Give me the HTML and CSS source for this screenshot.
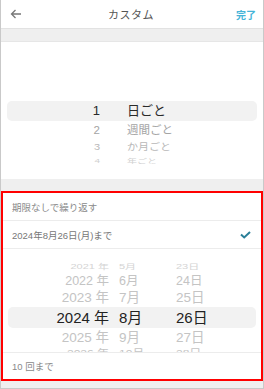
FILE: index.html
```html
<!DOCTYPE html>
<html lang="ja">
<head>
    <meta charset="UTF-8">
    <meta name="viewport" content="width=device-width, initial-scale=1.0">
    <title>カスタム</title>
    <link rel="stylesheet" href="styles.css">
</head>
<body>
    <div class="screen">
        <div class="header">
            <svg class="back" width="12" height="10" viewBox="0 0 12 10">
                <path d="M11 5H1.5M5.5 1L1.5 5l4 4" fill="none" stroke="#777" stroke-width="1.3"/>
            </svg>
            <div class="title">カスタム</div>
            <div class="done">完了</div>
        </div>
        <div class="band"></div>

        <div class="picker-top">
            <div class="wheel">
                <div class="hl"></div>
                <div class="prow sel"><span class="num">1</span><span class="unit">日ごと</span></div>
                <div class="prow near"><span class="num">2</span><span class="unit">週間ごと</span></div>
                <div class="prow far"><span class="num">3</span><span class="unit">か月ごと</span></div>
                <div class="prow farthest"><span class="num">4</span><span class="unit">年ごと</span></div>
            </div>
        </div>
        <div class="band band-mid"></div>

        <div class="panel">
            <div class="row">期限なしで繰り返す</div>
            <div class="row row-check">
                <span>2024年8月26日(月)まで</span>
                <svg width="11" height="8" viewBox="0 0 11 8">
                    <path d="M1 3.5l3.2 3L10 1" fill="none" stroke="#2a7f98" stroke-width="2"/>
                </svg>
            </div>
            <div class="date-wheel">
                <div class="hl"></div>
                <div class="drow farthest"><span>2021 年</span><span>5月</span><span>23日</span></div>
                <div class="drow far"><span>2022 年</span><span>6月</span><span>24日</span></div>
                <div class="drow near"><span>2023 年</span><span>7月</span><span>25日</span></div>
                <div class="drow sel"><span>2024 年</span><span>8月</span><span>26日</span></div>
                <div class="drow near2"><span>2025 年</span><span>9月</span><span>27日</span></div>
                <div class="drow far2"><span>2026 年</span><span>10月</span><span>28日</span></div>
            </div>
            <div class="row row-last">10 回まで</div>
        </div>
    </div>
</body>
</html>
```

FILE: styles.css
```css
* {
    margin: 0;
    padding: 0;
    box-sizing: border-box;
}

body {
    font-family: 'Liberation Sans', 'Noto Sans CJK JP', sans-serif;
    background: #fff;
}

.screen {
    width: 264px;
    height: 389px;
    border: 1px solid #c9c9c9;
    border-top: none;
    background: #efefef;
    overflow: hidden;
}

.header {
    height: 29px;
    background: #fff;
    display: flex;
    align-items: center;
    padding: 0 7px 0 9px;
    border-bottom: 1px solid #e2e2e2;
}

.back {
    width: 12px;
}

.title {
    flex: 1;
    text-align: center;
    font-size: 11px;
    color: #555;
    letter-spacing: 0.5px;
    padding-left: 4px;
}

.done {
    font-size: 10px;
    font-weight: bold;
    color: #45b4d8;
}

.band {
    height: 13px;
    background: #efefef;
    border-bottom: 1px solid #e6e6e6;
}

.band-mid {
    height: 12px;
    border-bottom: none;
}

.picker-top {
    height: 137px;
    background: #fff;
    padding-top: 59px;
}

.wheel {
    position: relative;
    height: 65px;
    overflow: hidden;
}

.hl {
    position: absolute;
    left: 6px;
    right: 6px;
    top: 0;
    height: 20px;
    background: #f2f2f2;
    border-radius: 5px;
}

.prow {
    position: relative;
    display: flex;
    align-items: center;
    color: #222;
}

.prow .num {
    width: 101px;
    text-align: right;
    padding-right: 2px;
}

.prow .unit {
    padding-left: 25px;
}

.prow.sel {
    height: 20px;
    line-height: 20px;
    font-size: 13px;
    color: #2a2a2a;
}

.prow.near {
    height: 18px;
    line-height: 18px;
    font-size: 11.5px;
    color: #a4a4a4;
}

.prow.far {
    height: 16px;
    line-height: 16px;
    font-size: 11px;
    color: #b8b8b8;
    transform: scaleY(0.85);
}

.prow.farthest {
    height: 12px;
    line-height: 12px;
    font-size: 10px;
    color: #d0d0d0;
    transform: scaleY(0.6);
}

.panel {
    height: 190px;
    background: #fff;
    border: 2px solid #ff0000;
}

.row {
    height: 28px;
    display: flex;
    align-items: center;
    padding-left: 9px;
    font-size: 9.5px;
    color: #8a8a8a;
    border-bottom: 1px solid #ececec;
}

.row-check {
    justify-content: space-between;
    padding-right: 10px;
    color: #777;
}

.row-last {
    border-bottom: none;
    border-top: 1px solid #ececec;
    height: 27px;
}

.date-wheel {
    position: relative;
    height: 103px;
    padding-top: 12px;
    overflow: hidden;
}

.date-wheel .hl {
    top: 58px;
    left: 5px;
    right: 5px;
    height: 21px;
}

.drow {
    position: relative;
    display: grid;
    grid-template-columns: 106px 47px auto;
    align-items: center;
    column-gap: 10px;
    color: #c4c4c4;
}

.drow span:first-child {
    text-align: right;
}

.drow.farthest {
    height: 12px;
    line-height: 12px;
    font-size: 11px;
    color: #d4d4d4;
    transform: scaleY(0.6);
}

.drow.far {
    height: 16px;
    line-height: 16px;
    font-size: 12.5px;
}

.drow.near {
    height: 18px;
    line-height: 18px;
    font-size: 13.5px;
}

.drow.sel {
    height: 21px;
    line-height: 21px;
    font-size: 15px;
    color: #222;
}

.drow.near2 {
    height: 20px;
    line-height: 20px;
    font-size: 13.5px;
}

.drow.far2 {
    height: 14px;
    line-height: 14px;
    font-size: 12px;
    transform: scaleY(0.75);
    transform-origin: top;
}
```
